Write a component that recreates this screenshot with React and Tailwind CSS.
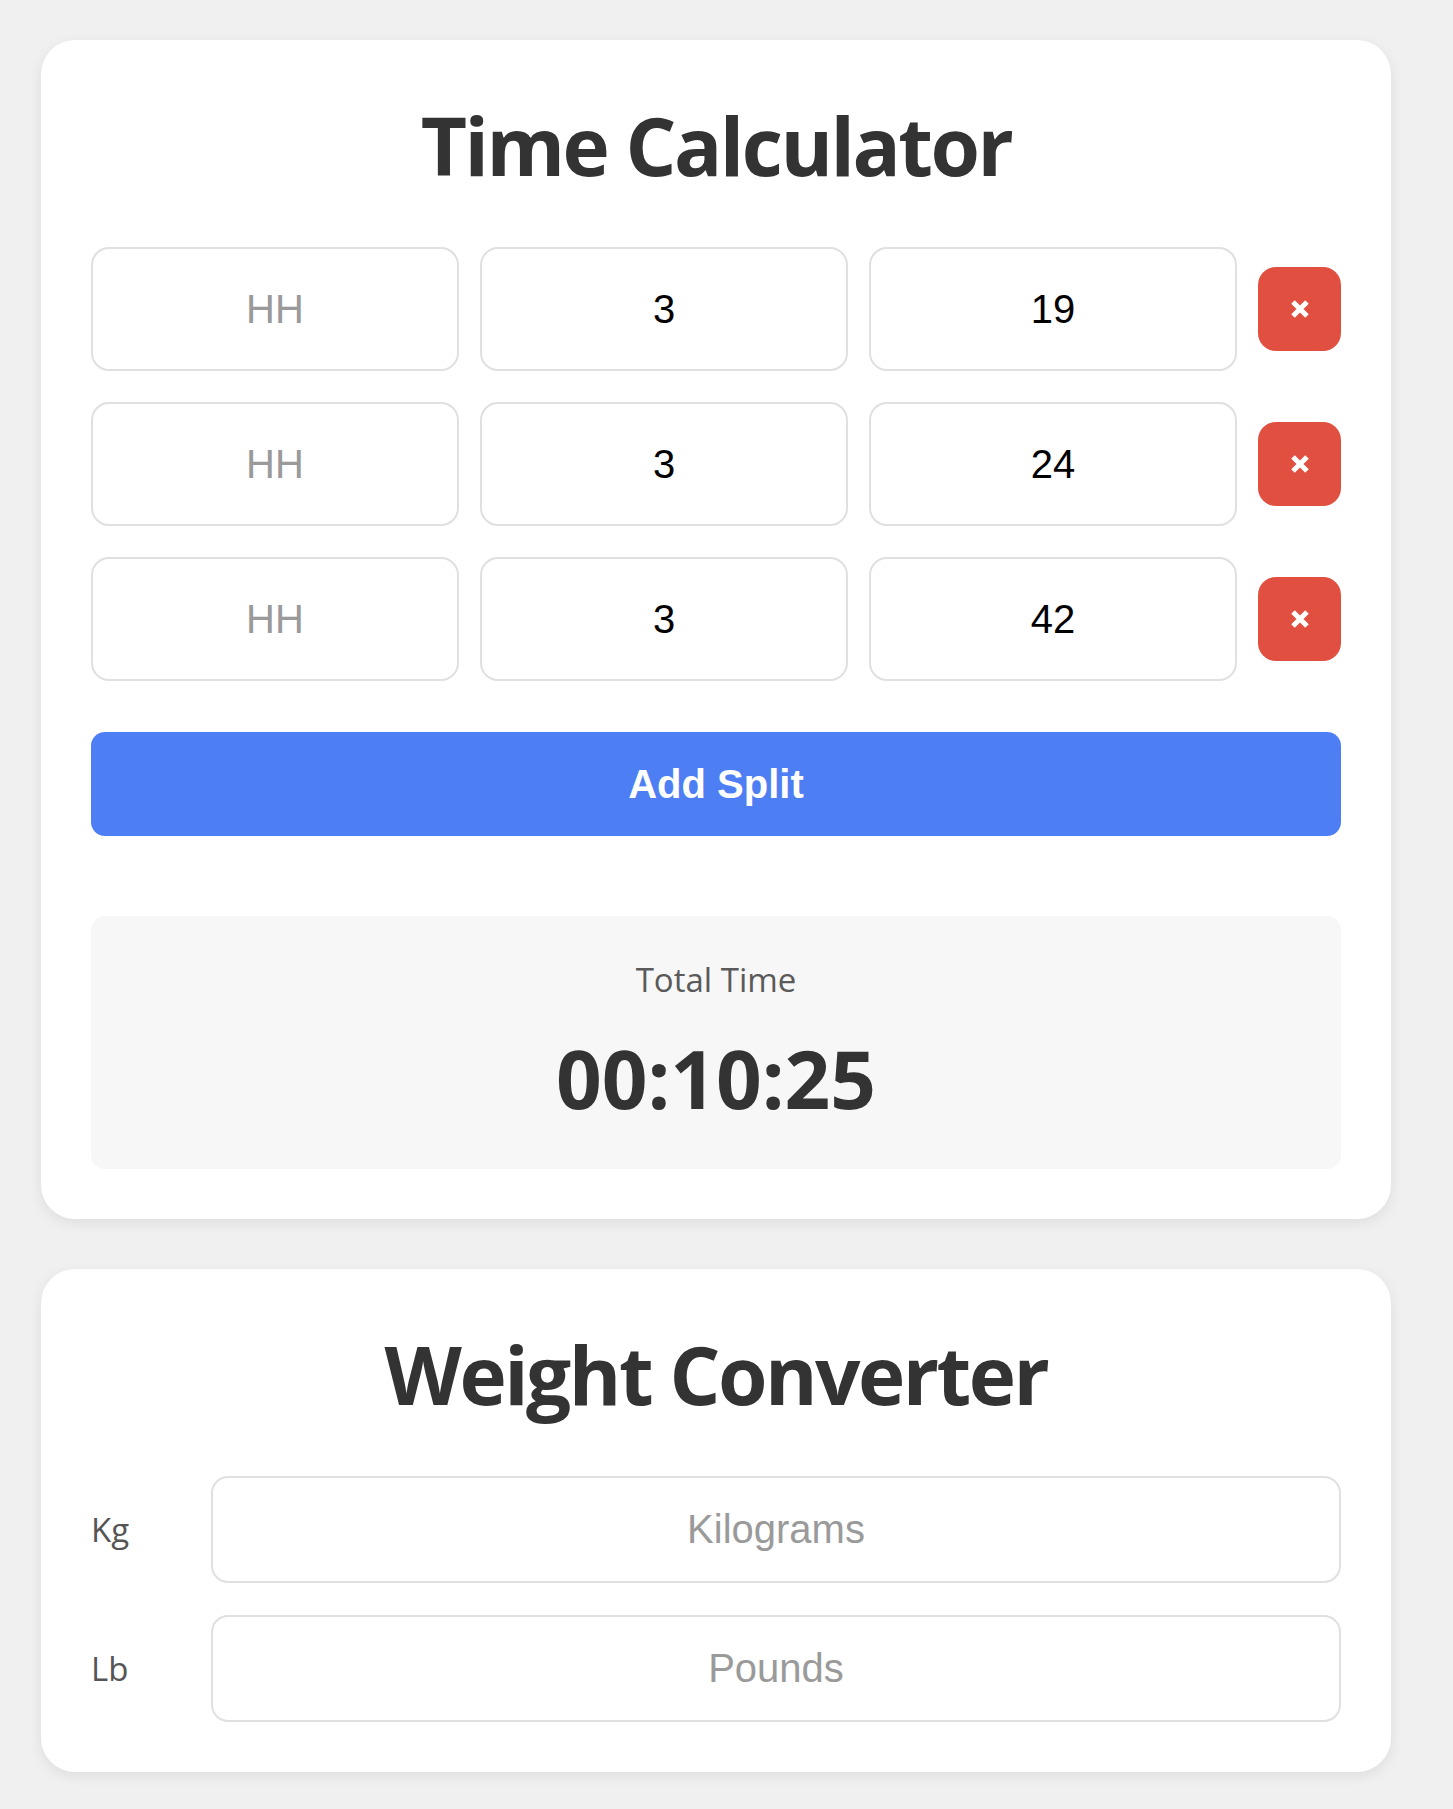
import React, { useState } from "react";

function XIcon() {
  return (
    <svg width="20" height="20" viewBox="0 0 20 20">
      <path d="M3 3 L17 17 M17 3 L3 17" stroke="white" strokeWidth="5" strokeLinecap="butt" />
    </svg>
  );
}

const inputCls =
  "flex-1 min-w-0 h-[124px] rounded-[18px] border-2 border-[#e0e0e0] bg-white text-center font-['Liberation_Sans',Arial,sans-serif] text-[40px] text-black placeholder:text-[#9a9a9a] outline-none";

const weightInputCls =
  "h-[107px] min-w-0 flex-1 rounded-[17px] border-2 border-[#e0e0e0] bg-white text-center font-['Liberation_Sans',Arial,sans-serif] text-[40px] text-black placeholder:text-[#9a9a9a] outline-none";

const titleCls =
  "mb-[47px] text-center font-['Open_Sans',sans-serif] text-[80px] font-bold leading-[110px] tracking-[-2.5px] text-[#333]";

const labelCls = "w-[100px] shrink-0 font-['Open_Sans',sans-serif] text-[33px] text-[#555]";

export default function App() {
  const [rows] = useState([
    { h: "", m: "3", s: "19" },
    { h: "", m: "3", s: "24" },
    { h: "", m: "3", s: "42" },
  ]);

  return (
    <div className="min-h-screen bg-[#f0f0f0] pt-[40px] pb-[36px] pl-[41px]">
      <div className="flex w-[1350px] flex-col gap-[50px]">
        {/* Time Calculator */}
        <div className="rounded-[34px] bg-white p-[50px] shadow-[0_4px_14px_rgba(0,0,0,0.08)]">
          <h1 className={titleCls}>Time Calculator</h1>
          <div className="flex flex-col gap-[31px]">
            {rows.map((r, i) => (
              <div key={i} className="flex items-center gap-[21px]">
                <input className={inputCls} placeholder="HH" defaultValue={r.h} />
                <input className={inputCls} placeholder="MM" defaultValue={r.m} />
                <input className={inputCls} placeholder="SS" defaultValue={r.s} />
                <button className="flex h-[84px] w-[83px] shrink-0 items-center justify-center rounded-[18px] bg-[#e04f3f]">
                  <XIcon />
                </button>
              </div>
            ))}
          </div>
          <button className="mt-[51px] flex h-[104px] w-full items-center justify-center rounded-[14px] bg-[#4d7ef4] font-['Liberation_Sans',Arial,sans-serif] text-[40px] font-bold text-white">
            Add Split
          </button>
          <div className="mt-[80px] flex h-[253px] flex-col items-center rounded-[14px] bg-[#f7f7f7] pt-[44px]">
            <div className="font-['Open_Sans',sans-serif] text-[33px] leading-[40px] text-[#5a5a5a]">
              Total Time
            </div>
            <div className="mt-[38px] font-['Open_Sans',sans-serif] text-[80px] font-bold leading-[80px] tracking-[0px] text-[#333]">
              00:10:25
            </div>
          </div>
        </div>

        {/* Weight Converter */}
        <div className="rounded-[34px] bg-white p-[50px] shadow-[0_4px_14px_rgba(0,0,0,0.08)]">
          <h2 className={titleCls}>Weight Converter</h2>
          <div className="flex flex-col gap-[32px]">
            <div className="flex items-center gap-[20px]">
              <label className={labelCls}>Kg</label>
              <input className={weightInputCls} placeholder="Kilograms" />
            </div>
            <div className="flex items-center gap-[20px]">
              <label className={labelCls}>Lb</label>
              <input className={weightInputCls} placeholder="Pounds" />
            </div>
          </div>
        </div>
      </div>
    </div>
  );
}
